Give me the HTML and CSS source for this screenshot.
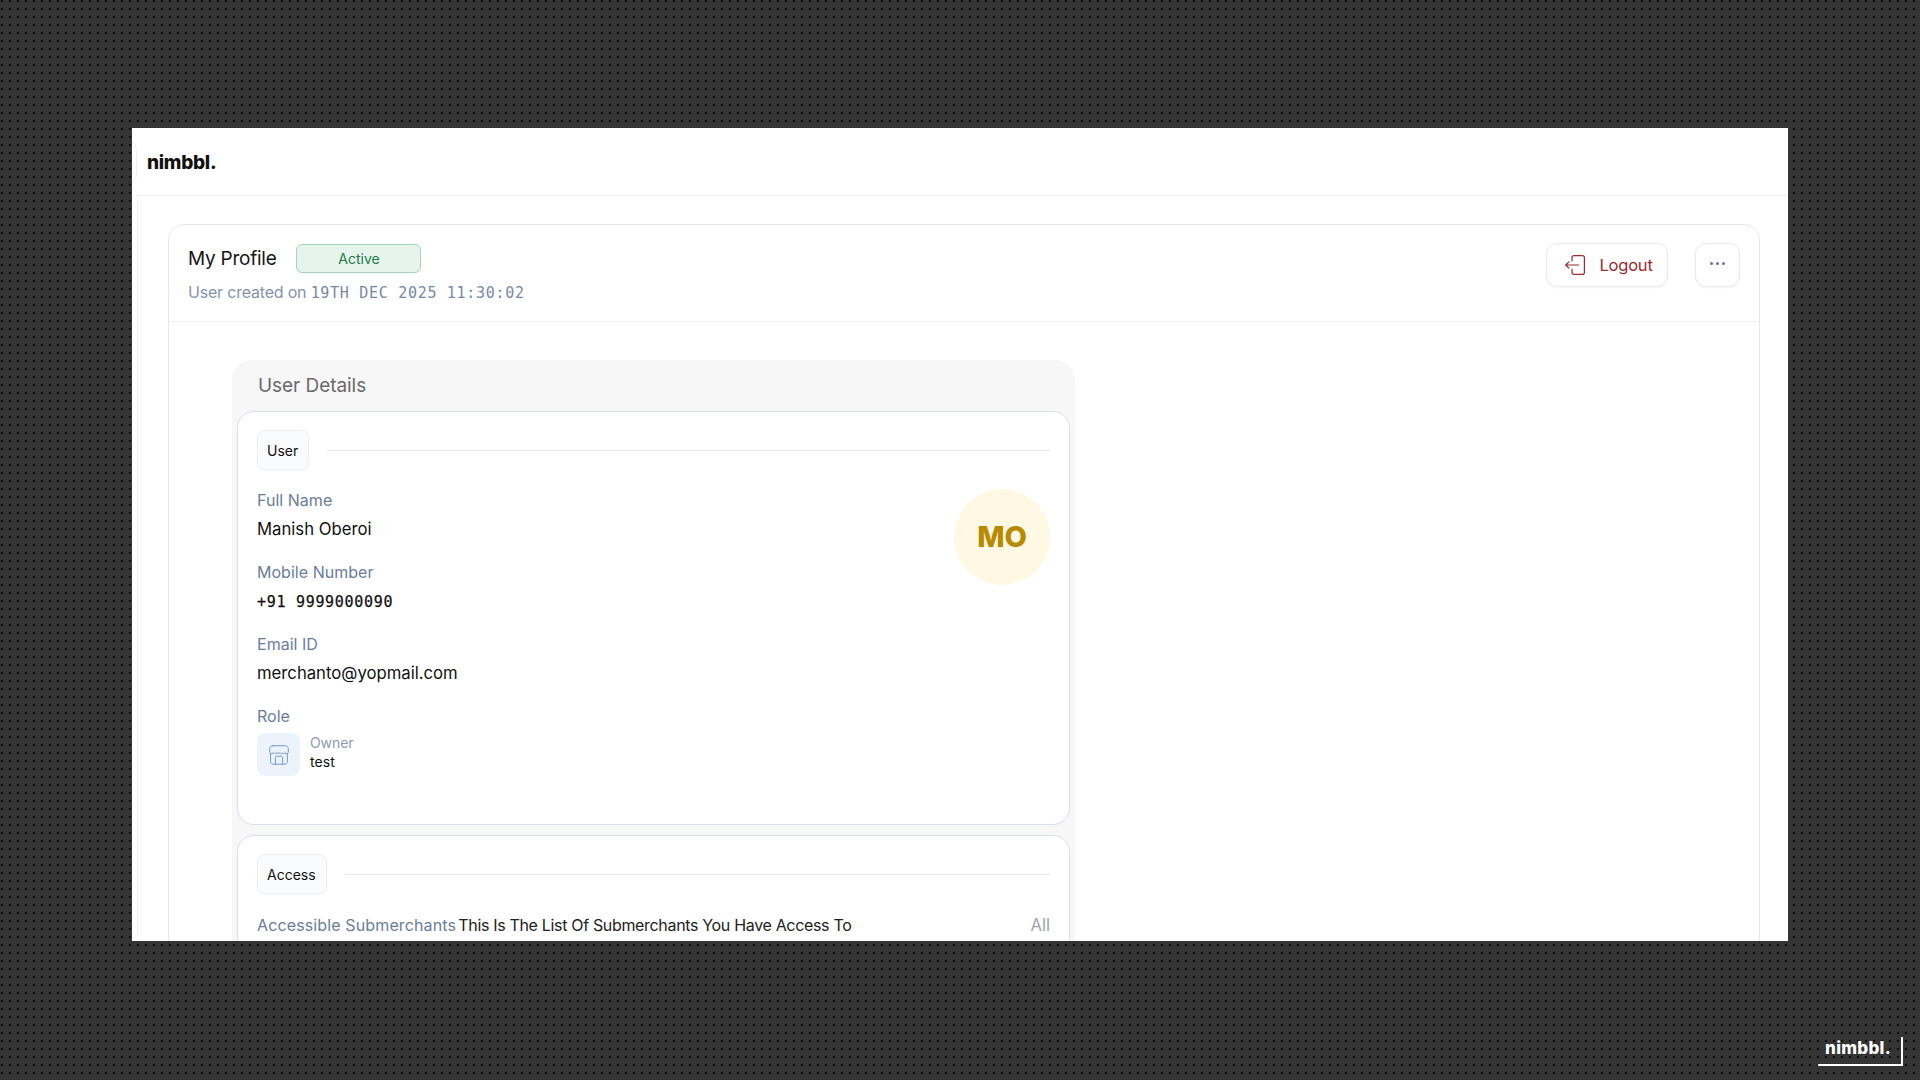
FILE: index.html
```html
<!DOCTYPE html>
<html lang="en">
<head>
<meta charset="utf-8">
<title>My Profile</title>
<link rel="stylesheet" href="styles.css">
</head>
<body>
<main class="window">
  <div class="sliver"></div>
  <header class="topbar"><span class="logo">nimbbl.</span></header>
  <div class="content">
    <section class="card">
      <div class="card-head">
        <div class="head-text">
          <div class="title-row">
            <h1 class="title">My Profile</h1>
            <span class="badge">Active</span>
          </div>
          <p class="created">User created on <span class="mono">19TH DEC 2025 11:30:02</span></p>
        </div>
        <div class="actions">
          <button class="btn btn-logout">
            <svg class="logout-icon" viewBox="0 0 20 20" fill="none" stroke="currentColor" stroke-width="1.2" stroke-linecap="round" stroke-linejoin="round"><path d="M7 6V2.6A2 2 0 0 1 9 .6h8.4a2 2 0 0 1 2 2v14.8a2 2 0 0 1-2 2H9a2 2 0 0 1-2-2V14"/><path d="M13.6 10H.7M3.9 6.8.7 10l3.2 3.2"/></svg>
            Logout
          </button>
          <button class="btn btn-more" aria-label="More"><span class="dot"></span><span class="dot"></span><span class="dot"></span></button>
        </div>
      </div>
      <div class="card-body">
        <section class="panel">
          <h2 class="panel-title">User Details</h2>
          <div class="sub-card sub-user">
            <div class="section-head"><span class="chip">User</span><span class="rule"></span></div>
            <div class="user-grid">
              <div class="fields">
                <div class="field"><div class="label">Full Name</div><div class="value">Manish Oberoi</div></div>
                <div class="field"><div class="label">Mobile Number</div><div class="value mono phone">+91 9999000090</div></div>
                <div class="field"><div class="label">Email ID</div><div class="value">merchanto@yopmail.com</div></div>
                <div class="field">
                  <div class="label">Role</div>
                  <div class="role">
                    <span class="role-icon">
                      <svg viewBox="0 0 20 20" fill="none" stroke="currentColor" stroke-width="1" stroke-linecap="round" stroke-linejoin="round"><path d="M3.6.7h12.8c1.6 0 2.9 1.3 2.9 2.9v3.6a1.7 1.7 0 0 1-3.3.5 1.8 1.8 0 0 1-3.2 0 1.8 1.8 0 0 1-2.8 0 1.8 1.8 0 0 1-2.8 0 1.8 1.8 0 0 1-3.2 0A1.7 1.7 0 0 1 .7 7.2V3.6C.7 2 2 .7 3.6.7Z"/><path d="M1.6 9v7.6c0 1.4 1.1 2.6 2.6 2.6h11.6c1.5 0 2.6-1.2 2.6-2.6V9"/><path d="M6.4 19.2v-6.4c0-.9.7-1.6 1.6-1.6h4c.9 0 1.6.7 1.6 1.6v6.4"/></svg>
                    </span>
                    <div class="role-text"><div class="role-name">Owner</div><div class="role-value">test</div></div>
                  </div>
                </div>
              </div>
              <div class="avatar">MO</div>
            </div>
          </div>
          <div class="sub-card sub-access">
            <div class="section-head"><span class="chip">Access</span><span class="rule"></span></div>
            <div class="access-row">
              <div class="access-text"><span class="access-label">Accessible Submerchants</span> This Is The List Of Submerchants You Have Access To</div>
              <span class="access-all">All</span>
            </div>
          </div>
        </section>
      </div>
    </section>
  </div>
</main>
<div class="brand"><span class="brand-text">nimbbl.</span></div>
</body>
</html>
```

FILE: styles.css
```css
* { box-sizing: border-box; }
html, body { margin: 0; height: 100%; }
body {
  position: relative;
  width: 1920px;
  height: 1080px;
  overflow: hidden;
  padding: 128px 132px 0;
  background-color: #343434;
  background-image: conic-gradient(at 2px 2px, transparent 75%, #0e0e0e 0);
  background-size: 8px 8px;
  background-position: 1px 0;
  font-family: Inter, "Noto Sans", sans-serif;
  color: #111;
}
.window {
  position: relative;
  height: 813px;
  overflow: hidden;
  background: #fff;
}
.sliver {
  position: absolute;
  left: -14px;
  top: 12px;
  width: 19px;
  height: 44px;
  border: 1px solid #eef0f4;
  border-radius: 10px;
}
.topbar {
  height: 68px;
  margin-left: 5px;
  display: flex;
  align-items: center;
  padding-left: 10px;
  border-bottom: 1px solid #edeff3;
}
.logo {
  margin-top: 1px;
  font-size: 19px;
  font-weight: 800;
  letter-spacing: -0.3px;
  color: #111;
}
.content {
  margin-left: 5px;
  padding: 28px 28px 0 30px;
  border-left: 1px solid #f1f3f6;
}
.card {
  border: 1px solid #e4e8ee;
  border-radius: 16px;
  height: 800px;
}
.card-head {
  height: 97px;
  display: flex;
  justify-content: space-between;
  align-items: flex-start;
  padding: 18px 19px 0;
  border-bottom: 1px solid #eceff3;
}
.head-text { display: flex; flex-direction: column; gap: 9px; margin-top: 1px; }
.title-row { display: flex; align-items: center; gap: 20px; }
.title { margin: 0; font-size: 19px; font-weight: 400; letter-spacing: -0.25px; color: #161616; }
.badge {
  width: 125px;
  height: 29px;
  display: flex;
  align-items: center;
  justify-content: center;
  font-size: 14px;
  color: #237a48;
  background: #e6f5ec;
  border: 1px solid #a3d5b6;
  border-radius: 6px;
}
.created { margin: 0; font-size: 16px; letter-spacing: -0.2px; color: #8494ad; }
.created .mono { color: #7789a6; }
.mono { font-family: "DejaVu Sans Mono", "Liberation Mono", monospace; font-size: 15px; letter-spacing: 0.7px; }
.actions { display: flex; gap: 27px; }
.btn {
  height: 44px;
  display: flex;
  align-items: center;
  justify-content: center;
  background: #fff;
  border: 1px solid #e8eaee;
  border-radius: 11px;
  box-shadow: 0 1px 2px rgba(20, 30, 50, 0.05);
  font-family: inherit;
  padding: 0;
}
.btn-logout { width: 122px; gap: 14px; padding-left: 4px; font-size: 16.5px; letter-spacing: -0.2px; color: #9c2b2e; }
.logout-icon { width: 20px; height: 20px; }
.btn-more { width: 45px; gap: 3px; padding-bottom: 3px; }
.dot { width: 3px; height: 3px; border-radius: 50%; background: #64779a; }
.card-body { padding: 38px 0 0 63px; }
.panel {
  width: 843px;
  height: 700px;
  padding: 0 5px;
  border-radius: 20px;
  background: #f7f7f7;
}
.panel-title {
  margin: 0;
  height: 51px;
  padding-left: 21px;
  display: flex;
  align-items: center;
  font-size: 19px;
  font-weight: 400;
  letter-spacing: -0.05px;
  color: #6a6a6a;
}
.sub-card {
  background: #fff;
  border: 1.5px solid #d9e0ea;
  border-radius: 17px;
  padding: 18px 19px;
}
.sub-user { height: 414px; }
.sub-access { margin-top: 10px; height: 300px; }
.section-head { display: flex; align-items: center; gap: 18px; }
.chip {
  height: 40px;
  padding: 0 10px 0 9px;
  display: flex;
  align-items: center;
  font-size: 14px;
  color: #111;
  background: #fafbfd;
  border: 1px solid #eef0f4;
  border-radius: 8px;
  box-shadow: 0 1px 2px rgba(20, 30, 50, 0.05);
}
.rule { flex: 1; height: 1px; background: #e7e9ed; }
.user-grid { display: flex; justify-content: space-between; align-items: flex-start; margin-top: 19px; }
.fields { display: flex; flex-direction: column; gap: 23px; margin-top: 2px; }
.field { display: flex; flex-direction: column; gap: 8px; }
.label { font-size: 16px; line-height: 19px; letter-spacing: 0.03px; color: #6a7e9c; }
.value { font-size: 16.7px; line-height: 22px; letter-spacing: 0; color: #111; }
.phone { font-size: 15px; line-height: 24px; margin-bottom: -2px; letter-spacing: 0.7px; color: #111; -webkit-text-stroke: 0.25px #111; }
.avatar {
  width: 96px;
  height: 96px;
  padding-bottom: 1px;
  display: flex;
  align-items: center;
  justify-content: center;
  border-radius: 50%;
  background: #fff8e3;
  color: #b88a00;
  font-size: 29px;
  font-weight: 800;
  letter-spacing: -0.1px;
}
.role { display: flex; gap: 10px; margin-top: -1px; }
.role-icon {
  width: 43px;
  height: 43px;
  display: flex;
  align-items: center;
  justify-content: center;
  background: #edf3fb;
  border-radius: 8px;
  color: #6f9bd0;
}
.role-icon svg { width: 20px; height: 20px; }
.role-text { display: flex; flex-direction: column; gap: 1px; padding-top: 1px; }
.role-name { font-size: 14px; line-height: 18px; letter-spacing: -0.1px; color: #8f9bb0; }
.role-value { font-size: 14px; line-height: 18px; letter-spacing: 0.1px; color: #111; }
.access-row { display: flex; justify-content: space-between; align-items: center; margin-top: 21px; font-size: 16px; }
.access-label { color: #6a7e9c; letter-spacing: 0.13px; margin-right: -2px; }
.access-text { color: #222; letter-spacing: -0.33px; }
.access-all { color: #9ea3aa; font-size: 16.7px; }
.brand {
  position: absolute;
  left: 1818px;
  top: 1037px;
  width: 85px;
  height: 29px;
  border-right: 2px solid #fff;
  border-bottom: 2px solid #fff;
  display: flex;
  justify-content: flex-end;
  padding-right: 10px;
}
.brand-text { font-size: 17px; line-height: 22px; font-weight: 800; color: #fff; letter-spacing: 0.3px; }
```
